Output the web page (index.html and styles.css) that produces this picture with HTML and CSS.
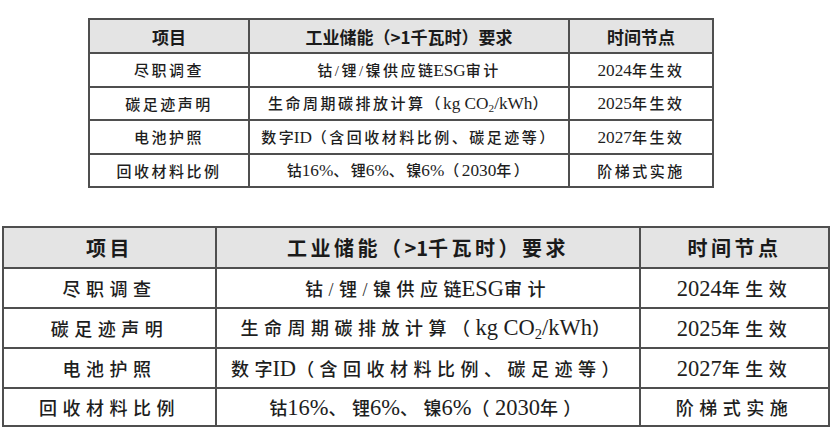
FILE: index.html
```html
<!DOCTYPE html>
<html lang="zh-CN">
<head>
<meta charset="utf-8">
<title>工业储能要求</title>
<link rel="stylesheet" href="styles.css">
</head>
<body>
<div class="page">
  <table class="req small">
    <colgroup><col class="c1"><col class="c2"><col class="c3"></colgroup>
    <thead>
      <tr><th>项目</th><th>工业储能（<span class="lat">&gt;1</span>千瓦时）要求</th><th>时间节点</th></tr>
    </thead>
    <tbody>
      <tr><td>尽职调查</td><td>钴/锂/镍供应<span class="t">链</span><span class="lat">ESG</span>审计</td><td><span class="lat">2024</span>年生效</td></tr>
      <tr><td>碳足迹声明</td><td>生命周期碳排放计算（<span class="lat">kg CO<sub>2</sub>/kWh</span>）</td><td><span class="lat">2025</span>年生效</td></tr>
      <tr><td>电池护照</td><td>数<span class="t">字</span><span class="lat">ID</span>（含回收材料比例、碳足迹等）</td><td><span class="lat">2027</span>年生效</td></tr>
      <tr><td>回收材料比例</td><td><span class="t">钴</span><span class="lat">16%</span>、<span class="t">锂</span><span class="lat">6%</span>、<span class="t">镍</span><span class="lat">6%</span>（<span class="lat">2030</span>年）</td><td>阶梯式实施</td></tr>
    </tbody>
  </table>
  <table class="req big">
    <colgroup><col class="c1"><col class="c2"><col class="c3"></colgroup>
    <thead>
      <tr><th>项目</th><th>工业储能（<span class="lat">&gt;1</span>千瓦时）要求</th><th>时间节点</th></tr>
    </thead>
    <tbody>
      <tr><td>尽职调查</td><td>钴/锂/镍供应<span class="t">链</span><span class="lat">ESG</span>审计</td><td><span class="lat">2024</span>年生效</td></tr>
      <tr><td>碳足迹声明</td><td>生命周期碳排放计算（<span class="lat">kg CO<sub>2</sub>/kWh</span>）</td><td><span class="lat">2025</span>年生效</td></tr>
      <tr><td>电池护照</td><td>数<span class="t">字</span><span class="lat">ID</span>（含回收材料比例、碳足迹等）</td><td><span class="lat">2027</span>年生效</td></tr>
      <tr><td>回收材料比例</td><td><span class="t">钴</span><span class="lat">16%</span>、<span class="t">锂</span><span class="lat">6%</span>、<span class="t">镍</span><span class="lat">6%</span>（<span class="lat">2030</span>年）</td><td>阶梯式实施</td></tr>
    </tbody>
  </table>
</div>
</body>
</html>
```
FILE: styles.css
```css
html, body {
  margin: 0;
  padding: 0;
  background: #ffffff;
}
.page {
  display: flex;
  flex-direction: column;
  align-items: flex-start;
  width: 831px;
  height: 430px;
  overflow: hidden;
}
.req {
  border-collapse: collapse;
  table-layout: fixed;
  color: #1e1e1e;
  font-family: "Liberation Serif", "Noto Sans CJK SC", serif;
}
.req th, .req td {
  border: 2px solid #4f4f4f;
  text-align: center;
  padding: 0;
  white-space: nowrap;
  overflow: hidden;
}
.req th {
  background: #e4e4e4;
  font-family: "Noto Sans CJK SC", "Liberation Sans", sans-serif;
  font-weight: 700;
  color: #1a1a1a;
}
.req td {
  font-weight: 500;
}
.req td .lat {
  letter-spacing: 0;
}
.req .t,
.req th .lat {
  letter-spacing: 0;
}
.req sub {
  font-size: 0.65em;
  vertical-align: -0.25em;
  letter-spacing: 0;
}

/* small table */
.small {
  margin: 18px 0 0 88px;
  width: 624px;
}
.small .c1 { width: 160px; }
.small .c2 { width: 320px; }
.small .c3 { width: 144px; }
.small th {
  height: 32px;
  font-size: 17px;
}
.small td {
  height: 31.5px;
  font-size: 15px;
  letter-spacing: 2.5px;
}
.small td .lat {
  font-size: 1.15em;
}

/* big table */
.big {
  margin: 38px 0 0 2px;
  width: 826px;
}
.big .c1 { width: 213px; }
.big .c2 { width: 424px; }
.big .c3 { width: 189px; }
.big th {
  height: 39px;
  font-size: 20px;
  letter-spacing: 3.5px;
}
.big td {
  height: 38px;
  font-size: 18px;
  letter-spacing: 5.5px;
}
.big td .lat {
  font-size: 1.25em;
}
.big tbody tr:last-child td {
  height: 36px;
}
```
